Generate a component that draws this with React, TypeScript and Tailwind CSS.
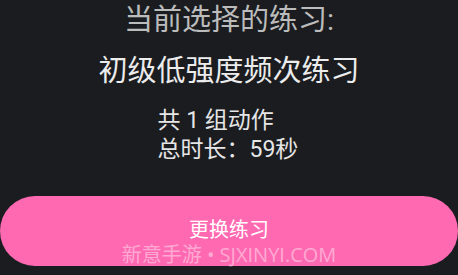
import React from "react";

export default function App() {
  return (
    <div
      className="w-[458px] h-[275px] bg-[#1a1c20] flex flex-col items-center overflow-hidden"
      style={{ fontFamily: 'Roboto, "Noto Sans CJK SC", sans-serif' }}
    >
      <div className="h-[41px] leading-[41px] text-[29px] text-[#bcbcbc]">当前选择的练习:</div>
      <div className="mt-[11px] h-[39px] leading-[39px] text-[29px] text-[#ececec]">初级低强度频次练习</div>
      <div className="mt-[15px] w-[145px] ml-[2px] text-[23px] leading-[29px] text-[#e6e6e6]">
        <div className="whitespace-pre">共 1 组动作</div>
        <div className="whitespace-pre">总时长：59秒</div>
      </div>
      <div className="mt-[32px] relative w-[458px] h-[70px] rounded-full bg-[#ff69b2] flex flex-col items-center">
        <div className="mt-[26px] text-[20px] leading-[17px] text-white">更换练习</div>
        <div
          className="mt-[7px] text-[20px] leading-[17px] text-[#ffa9d2]"
          style={{ fontFamily: '"Open Sans", "Noto Sans CJK SC", sans-serif' }}
        >
          新意手游 • SJXINYI.COM
        </div>
      </div>
    </div>
  );
}
